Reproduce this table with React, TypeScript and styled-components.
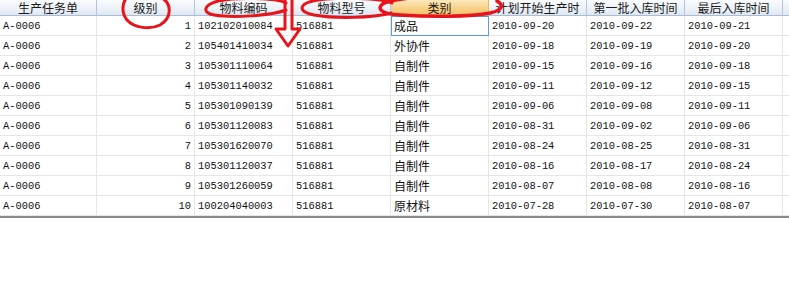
import React from "react";
import styled, { createGlobalStyle } from "styled-components";

const Global = createGlobalStyle`
  html, body { margin: 0; padding: 0; background: #ffffff; }
  body { width: 789px; height: 299px; overflow: hidden; }
`;

const Page = styled.div`
  position: relative;
  width: 789px;
  height: 299px;
  background: #ffffff;
`;

const Grid = styled.div`
  display: grid;
  grid-template-columns: 97px 98px 98px 98px 98px 98px 98px 98px 1fr;
  grid-auto-rows: 20px;
  grid-template-rows: 16px;
  border-bottom: 2px solid #8a8a8a;
`;

const HeadCell = styled.div<{ $hot?: boolean }>`
  box-sizing: border-box;
  height: 16px;
  display: flex;
  align-items: center;
  justify-content: center;
  font-family: "Noto Sans CJK SC", sans-serif;
  font-size: 12px;
  line-height: 1;
  color: #1a1a1a;
  white-space: nowrap;
  overflow: hidden;
  border-right: 1px solid ${(p) => (p.$hot ? "#e7b55a" : "#b3c4da")};
  border-bottom: 1px solid #a9bdd6;
  background: ${(p) =>
    p.$hot
      ? "linear-gradient(#fde8bd, #f8cf83 60%, #f5c46c)"
      : "linear-gradient(#f9fbfd, #eef3f9 50%, #dfe7f1)"};
`;

const Cell = styled.div<{ $align?: "left" | "right"; $cjk?: boolean; $selected?: boolean }>`
  box-sizing: border-box;
  height: 20px;
  display: flex;
  align-items: center;
  justify-content: ${(p) => (p.$align === "right" ? "flex-end" : "flex-start")};
  padding: 0 3px 0 3px;
  font-family: ${(p) =>
    p.$cjk ? `"Noto Sans CJK SC", sans-serif` : `"Liberation Mono", monospace`};
  font-size: ${(p) => (p.$cjk ? "12px" : "10.4px")};
  color: #111111;
  white-space: nowrap;
  overflow: hidden;
  border-right: 1px solid #e6e6e6;
  border-bottom: 1px solid #e6e6e6;
  ${(p) =>
    p.$selected
      ? `outline: 1px solid #5a9be0; outline-offset: -1px; border-color: #5a9be0;`
      : ""}
`;

const Overlay = styled.svg`
  position: absolute;
  left: 0;
  top: 0;
  pointer-events: none;
`;

const headers = [
  "生产任务单",
  "级别",
  "物料编码",
  "物料型号",
  "类别",
  "计划开始生产时",
  "第一批入库时间",
  "最后入库时间",
  "",
];

type Row = [string, number, string, string, string, string, string, string];

const rows: Row[] = [
  ["A-0006", 1, "102102010084", "516881", "成品", "2010-09-20", "2010-09-22", "2010-09-21"],
  ["A-0006", 2, "105401410034", "516881", "外协件", "2010-09-18", "2010-09-19", "2010-09-20"],
  ["A-0006", 3, "105301110064", "516881", "自制件", "2010-09-15", "2010-09-16", "2010-09-18"],
  ["A-0006", 4, "105301140032", "516881", "自制件", "2010-09-11", "2010-09-12", "2010-09-15"],
  ["A-0006", 5, "105301090139", "516881", "自制件", "2010-09-06", "2010-09-08", "2010-09-11"],
  ["A-0006", 6, "105301120083", "516881", "自制件", "2010-08-31", "2010-09-02", "2010-09-06"],
  ["A-0006", 7, "105301620070", "516881", "自制件", "2010-08-24", "2010-08-25", "2010-08-31"],
  ["A-0006", 8, "105301120037", "516881", "自制件", "2010-08-16", "2010-08-17", "2010-08-24"],
  ["A-0006", 9, "105301260059", "516881", "自制件", "2010-08-07", "2010-08-08", "2010-08-16"],
  ["A-0006", 10, "100204040003", "516881", "原材料", "2010-07-28", "2010-07-30", "2010-08-07"],
];

export default function App() {
  return (
    <Page>
      <Global />
      <Grid>
        {headers.map((h, i) => (
          <HeadCell key={"h" + i} $hot={i === 4}>
            {h}
          </HeadCell>
        ))}
        {rows.map((r, ri) => (
          <React.Fragment key={ri}>
            <Cell>{r[0]}</Cell>
            <Cell $align="right">{r[1]}</Cell>
            <Cell>{r[2]}</Cell>
            <Cell>{r[3]}</Cell>
            <Cell $cjk $selected={ri === 0}>
              {r[4]}
            </Cell>
            <Cell>{r[5]}</Cell>
            <Cell>{r[6]}</Cell>
            <Cell>{r[7]}</Cell>
            <Cell />
          </React.Fragment>
        ))}
      </Grid>
      <Overlay width="789" height="299" viewBox="0 0 789 299">
        <g fill="none" stroke="#e8141b" strokeWidth="3" strokeLinecap="round" strokeLinejoin="round">
          {/* 级别 circle */}
          <path d="M162 -2 C172 4 172 18 160 25 C150 30 134 28 127 20 C121 13 122 2 128 -4" />
          {/* 物料编码 ellipse */}
          <path d="M286 3 C276 -2 238 -3 218 1 C203 5 202 13 214 15 C232 18 270 16 286 10" />
          {/* arrow */}
          <path d="M285 0 L285 29 L276 29 L288 46 L300 29 L292 29 L292 0" />
          {/* 物料型号 ellipse */}
          <path d="M392 3 C380 -2 340 -3 318 0 C298 3 297 12 314 15 C336 19 372 18 391 13" />
          {/* 类别 ellipse */}
          <path d="M384 3 C376 8 380 14 400 15 C430 17 470 17 490 13 C503 10 504 5 497 1" strokeWidth="3.5" />
          <path d="M384 3 C392 0 400 -1 410 -2" strokeWidth="3.5" />
        </g>
      </Overlay>
    </Page>
  );
}
